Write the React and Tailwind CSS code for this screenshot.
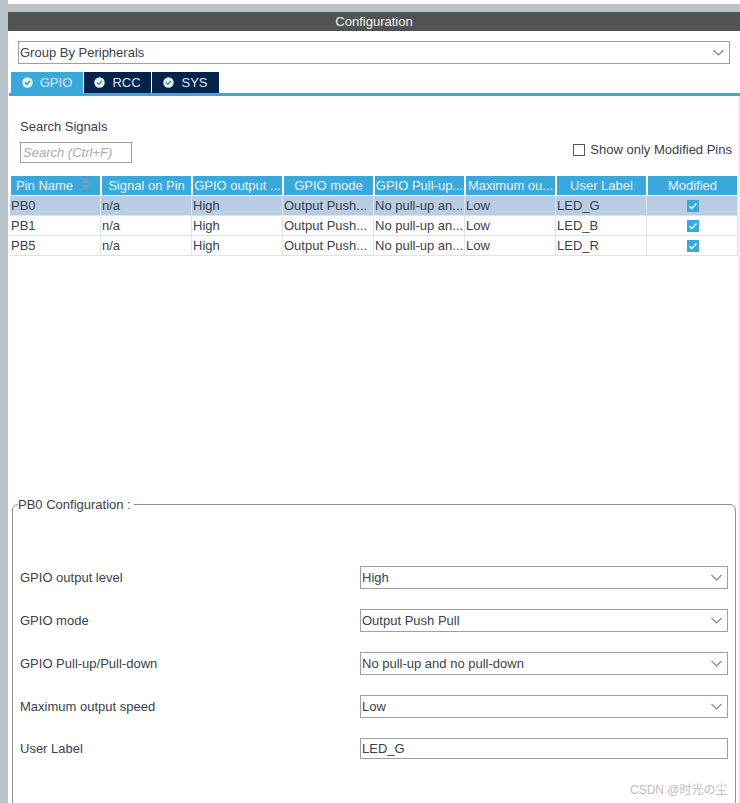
import React from "react";

const columns = [
  "Signal on Pin",
  "GPIO output ...",
  "GPIO mode",
  "GPIO Pull-up...",
  "Maximum ou...",
  "User Label",
  "Modified",
];

const rows = [
  { pin: "PB0", label: "LED_G", selected: true },
  { pin: "PB1", label: "LED_B" },
  { pin: "PB5", label: "LED_R" },
];

const fields = [
  { name: "GPIO output level", value: "High" },
  { name: "GPIO mode", value: "Output Push Pull" },
  { name: "GPIO Pull-up/Pull-down", value: "No pull-up and no pull-down" },
  { name: "Maximum output speed", value: "Low" },
];

function Chevron() {
  return (
    <svg width="11" height="7" viewBox="0 0 11 7" fill="none" stroke="#7f8689" strokeWidth="1.1">
      <path d="M0.5 1l5 5 5-5" />
    </svg>
  );
}

function TabIcon() {
  return (
    <svg width="11" height="11" viewBox="0 0 12 12" fill="none">
      <circle cx="6" cy="6" r="5.7" fill="#e4f2ec" />
      <path d="M3.2 6l2 2 3.6-3.6" stroke="#3d9c78" strokeWidth="1.6" />
    </svg>
  );
}

function Tab({ name, active, className }) {
  return (
    <div
      className={`flex h-[21px] items-center justify-center gap-[7px] text-[#dfe7ee] ${
        active ? "bg-[#39a9dc]" : "bg-[#03234b]"
      } ${className}`}
    >
      <TabIcon />
      <span>{name}</span>
    </div>
  );
}

function Cell({ children, className = "" }) {
  return (
    <div className={`flex h-5 items-center overflow-hidden whitespace-nowrap pl-px ${className}`}>
      {children}
    </div>
  );
}

function CheckedBox() {
  return (
    <div className="flex h-3 w-3 items-center justify-center bg-[#39a9dc]">
      <svg width="10" height="10" viewBox="0 0 10 10" fill="none" stroke="#ffffff" strokeWidth="1.4">
        <path d="M1.5 5.2l2.3 2.3L8.500 2.5" />
      </svg>
    </div>
  );
}

function Select({ value, className = "" }) {
  return (
    <div
      className={`flex h-[23px] items-center justify-between border border-[#9aa0a3] bg-white pl-px pr-[5px] ${className}`}
    >
      <span>{value}</span>
      <Chevron />
    </div>
  );
}

export default function App() {
  return (
    <div
      className="relative flex h-[803px] w-[740px] overflow-hidden bg-[#b8c4ca] text-[13px] leading-none text-[#3c3f4a]"
      style={{ fontFamily: '"Liberation Sans", "Noto Sans CJK SC", sans-serif' }}
    >
      <div className="ml-2 flex w-[732px] flex-col">
        <div className="h-1 shrink-0 bg-white" />
        <div className="h-2 shrink-0" />
        <div className="flex h-[19px] shrink-0 items-center justify-center bg-[#525453] text-[#f2f2f2]">
          Configuration
        </div>

        <div className="flex min-h-0 flex-1 flex-col overflow-hidden bg-white pl-px">
          <Select value="Group By Peripherals" className="ml-[9px] mt-[10px] w-[712px] shrink-0" />

          <div className="mt-2 flex shrink-0 gap-px border-b-[3px] border-[#39a9dc] pl-[2px]">
            <Tab name="GPIO" active className="w-[72px]" />
            <Tab name="RCC" className="w-[67px]" />
            <Tab name="SYS" className="w-[67px]" />
          </div>

          <div className="min-h-0 flex-1 border-r-2 border-[#efefef]">
            <div className="mt-6 flex items-end justify-between pl-[11px] pr-[6px]">
              <div>
                <div>Search Signals</div>
                <div className="mt-[9px] flex h-[21px] w-28 items-center border border-[#9aa0a3] pl-[2px] italic text-[#a9abae]">
                  Search (Ctrl+F)
                </div>
              </div>
              <div className="mb-[7px] flex items-center gap-[5px]">
                <div className="h-3 w-3 border border-[#55585c]" />
                <span>Show only Modified Pins</span>
              </div>
            </div>

            <div className="ml-px mt-[13px] grid grid-cols-[91px_91px_91px_91px_91px_91px_91px_91px]">
              <div className="relative mx-px mb-px flex h-[19px] items-center bg-[#39a9dc] pl-[5px] text-[#e8f3f9]">
                Pin Name
                <svg className="absolute right-[10px] top-[2px]" width="9" height="12" viewBox="0 0 9 12" fill="#7f9fb3">
                  <path d="M4.500 0L9 5H0zM0 7h9l-4.500 5z" />
                </svg>
              </div>
              {columns.map((c) => (
                <div
                  key={c}
                  className="mx-px mb-px flex h-[19px] items-center justify-center overflow-hidden whitespace-nowrap bg-[#39a9dc] text-[#e8f3f9]"
                >
                  {c}
                </div>
              ))}

              {rows.map((r) => {
                const border = `border-b border-r border-[#dfe2e6] ${r.selected ? "bg-[#b7cde3]" : "bg-white"}`;
                return (
                  <React.Fragment key={r.pin}>
                    <Cell className={border}>{r.pin}</Cell>
                    <Cell className={border}>n/a</Cell>
                    <Cell className={border}>High</Cell>
                    <Cell className={border}>Output Push...</Cell>
                    <Cell className={border}>No pull-up an...</Cell>
                    <Cell className={border}>Low</Cell>
                    <Cell className={border}>{r.label}</Cell>
                    <Cell className={`${border} justify-center`}>
                      <CheckedBox />
                    </Cell>
                  </React.Fragment>
                );
              })}
            </div>

            <fieldset className="ml-[3px] mr-[2px] mt-[242px] h-[400px] rounded-t-[6px] border border-[#8b9194] px-[7px]">
              <legend className="ml-[-2px] pr-[3px]">PB0 Configuration :</legend>
              <div className="mt-[55px] flex flex-col gap-5">
                {fields.map((f) => (
                  <div key={f.name} className="flex items-center justify-between">
                    <span>{f.name}</span>
                    <Select value={f.value} className="w-[368px]" />
                  </div>
                ))}
                <div className="flex items-center justify-between">
                  <span>User Label</span>
                  <div className="flex h-[21px] w-[368px] items-center border border-[#9aa0a3] pl-px">LED_G</div>
                </div>
              </div>
            </fieldset>
          </div>
        </div>
      </div>

      <div className="absolute left-[630px] top-[784px] text-[12px] text-[#bdbdbd]">CSDN @时光の尘</div>
    </div>
  );
}
